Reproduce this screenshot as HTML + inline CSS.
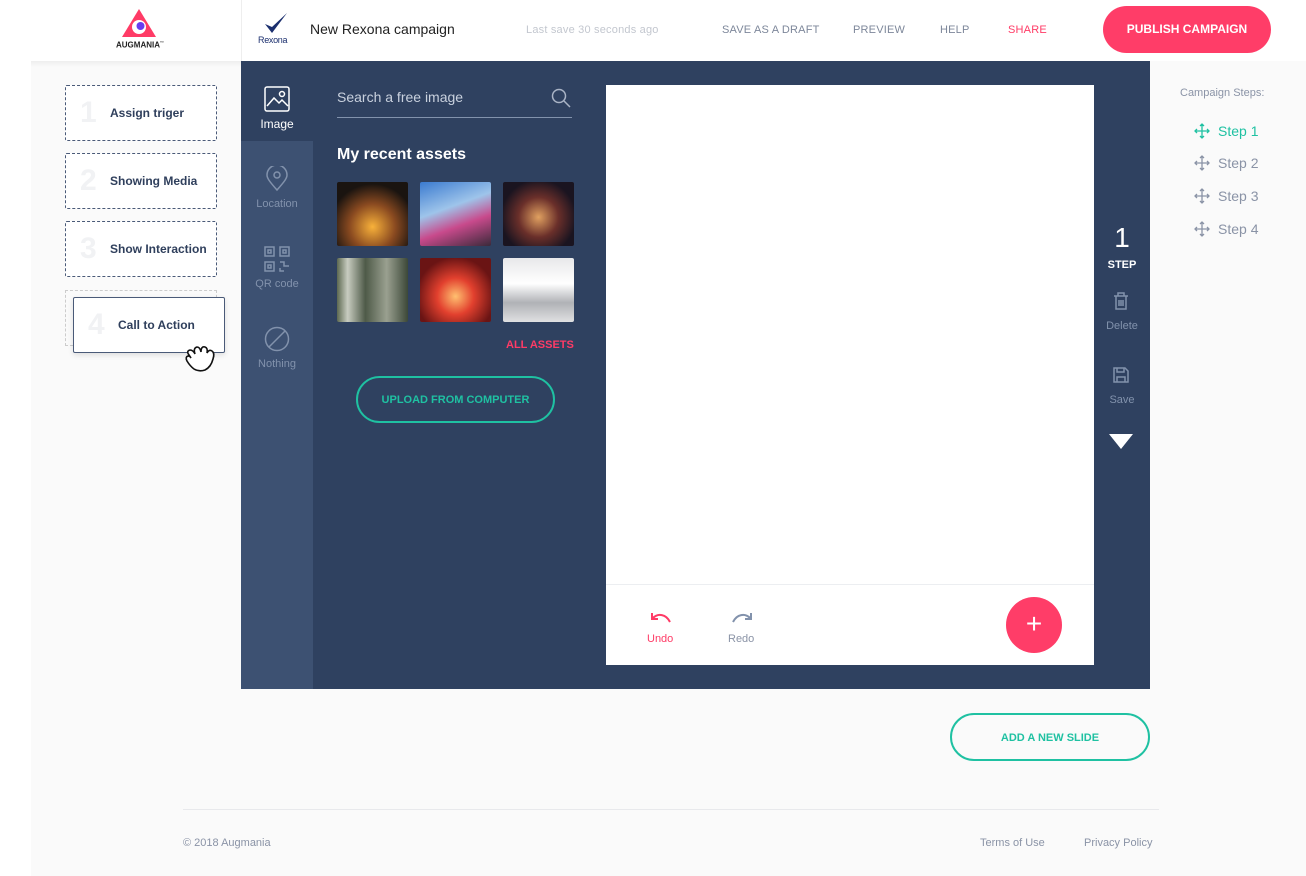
<!DOCTYPE html>
<html><head><meta charset="utf-8"><style>
*{margin:0;padding:0;box-sizing:border-box}
body{width:1306px;height:876px;background:#fff;font-family:"Liberation Sans",Roboto,sans-serif;position:relative;overflow:hidden}
.a{position:absolute}
.bg{left:31px;top:61px;width:1275px;height:815px;background:#fafafa}
.hdr{left:0;top:0;width:1306px;height:61px;background:#fff}
.hsh{left:31px;top:61px;width:210px;height:6px;background:linear-gradient(#eee,#fafafa)}
.nav{top:24px;font-size:11px;color:#7d879a;letter-spacing:.2px}
.card{left:65px;width:152px;height:56px;border:1px dashed #4a5a78;border-radius:2px;background:#fff}
.card .n{position:absolute;left:14px;top:10px;font-size:30px;font-weight:bold;color:#f1f2f4}
.card .t{position:absolute;left:44px;top:20px;font-size:12px;font-weight:bold;color:#2f3f5c}
.dark{left:241px;top:61px;width:909px;height:628px;background:#2f4160}
.col{left:241px;top:141px;width:72px;height:548px;background:#3d5172}
.ic{width:72px;text-align:center;font-size:11px;color:#8292ac;left:241px}
.th{width:71px;height:64px;border-radius:2px}
.st{left:1218px;font-size:14px;color:#8a93a6}
.mv{left:1194px}
</style></head><body>
<div class="a bg"></div>
<div class="a hdr"></div>
<div class="a hsh"></div>
<div class="a" style="left:241px;top:0;width:1px;height:61px;background:#eee"></div>
<svg class="a" style="left:122px;top:9px" width="34" height="30"><polygon points="17,0 34,28 0,28" fill="#ff3b66"/><circle cx="17" cy="18" r="7" fill="#fff"/><circle cx="18.5" cy="17" r="4" fill="#6a3cf0"/></svg>
<div class="a" style="left:116px;top:40px;font-size:8px;font-weight:bold;color:#222">AUGMANIA<sup style="font-size:4px">™</sup></div>
<svg class="a" style="left:262px;top:12px" width="26" height="24"><path d="M3 12 L10 21 L25 1 L10 15 Z" fill="#1b2f6e"/></svg>
<div class="a" style="left:258px;top:35px;font-size:9px;color:#1b2f6e;letter-spacing:-.3px">Rexona</div>
<div class="a" style="left:310px;top:21px;font-size:14px;color:#222">New Rexona campaign</div>
<div class="a nav" style="left:526px;color:#c3c7cf">Last save 30 seconds ago</div>
<div class="a nav" style="left:722px">SAVE AS A DRAFT</div>
<div class="a nav" style="left:853px">PREVIEW</div>
<div class="a nav" style="left:940px">HELP</div>
<div class="a nav" style="left:1008px;color:#ff3b66">SHARE</div>
<div class="a" style="left:1103px;top:6px;width:168px;height:47px;border-radius:24px;background:#ff3d68;color:#fff;font-size:12px;font-weight:bold;text-align:center;line-height:47px">PUBLISH CAMPAIGN</div>
<div class="a card" style="top:85px"><span class="n">1</span><span class="t">Assign triger</span></div>
<div class="a card" style="top:153px"><span class="n">2</span><span class="t">Showing Media</span></div>
<div class="a card" style="top:221px"><span class="n">3</span><span class="t">Show Interaction</span></div>
<div class="a" style="left:65px;top:290px;width:152px;height:56px;border:1px dashed #ccc"></div>
<div class="a card" style="left:73px;top:297px;border:1px solid #4a5a78;box-shadow:0 2px 6px rgba(0,0,0,.12)"><span class="n">4</span><span class="t">Call to Action</span></div>
<svg class="a" style="left:183px;top:341px" width="36" height="34"><path d="M6 14 q-3-4 1-5 q3 0 5 4 q-2-6 2-7 q3 0 4 5 q0-6 4-5 q3 1 2 6 q2-4 5-2 q3 2 1 8 q-2 8-8 11 q-6 2-11-1 q-4-3-7-8 q-2-4 1-5 q2 0 3 2 Z" fill="#fff" stroke="#111" stroke-width="1.6"/></svg>
<div class="a dark"></div>
<div class="a col"></div>
<svg class="a" style="left:264px;top:86px" width="26" height="26" fill="none" stroke="#fff" stroke-width="1.5"><rect x="1" y="1" width="24" height="24" rx="2"/><path d="M3 20 l7-8 5 5 3-3 6 6"/><circle cx="18" cy="8" r="2.5"/></svg>
<div class="a ic" style="top:117px;color:#fff;font-size:12px">Image</div>
<svg class="a" style="left:265px;top:166px" width="24" height="26" fill="none" stroke="#8292ac" stroke-width="1.5"><path d="M12 24 C4 15 2 12 2 9 a10 10 0 0 1 20 0 c0 3-2 6-10 15z"/><circle cx="12" cy="9" r="3"/></svg>
<div class="a ic" style="top:198px">Location</div>
<svg class="a" style="left:264px;top:246px" width="26" height="26" fill="none" stroke="#8292ac" stroke-width="1.5"><rect x="1" y="1" width="9" height="9"/><rect x="16" y="1" width="9" height="9"/><rect x="1" y="16" width="9" height="9"/><rect x="4" y="4" width="3" height="3"/><rect x="19" y="4" width="3" height="3"/><rect x="4" y="19" width="3" height="3"/><path d="M16 16h4v4h5M16 22v3h4"/></svg>
<div class="a ic" style="top:278px">QR code</div>
<svg class="a" style="left:264px;top:326px" width="26" height="26" fill="none" stroke="#8292ac" stroke-width="1.5"><circle cx="13" cy="13" r="11.5"/><path d="M5 21 L21 5"/></svg>
<div class="a ic" style="top:358px">Nothing</div>
<div class="a" style="left:337px;top:89px;font-size:14px;color:#c9d1de">Search a free image</div>
<svg class="a" style="left:551px;top:88px" width="20" height="20" fill="none" stroke="#aab4c6" stroke-width="1.5"><circle cx="8" cy="8" r="6.5"/><path d="M13 13 l6 6"/></svg>
<div class="a" style="left:337px;top:117px;width:235px;height:1px;background:#8292ac"></div>
<div class="a" style="left:337px;top:146px;font-size:16px;font-weight:bold;color:#fff">My recent assets</div>
<div class="a th" style="left:337px;top:182px;background:radial-gradient(circle at 50% 70%,#f8b13a,#8a4a20 40%,#1a1410 75%)"></div>
<div class="a th" style="left:420px;top:182px;background:linear-gradient(160deg,#3b7bd0,#9ec4ea 40%,#c84a8c 65%,#3a2a3a)"></div>
<div class="a th" style="left:503px;top:182px;background:radial-gradient(circle at 50% 55%,#e0a060,#6a2f2a 40%,#1a1420 75%)"></div>
<div class="a th" style="left:337px;top:258px;background:linear-gradient(90deg,#5c6850,#c8ccc0 15%,#4e5a48 40%,#9aa090 70%,#3c4838)"></div>
<div class="a th" style="left:420px;top:258px;background:radial-gradient(circle at 50% 60%,#ffc070,#e2402e 35%,#6a1414 75%)"></div>
<div class="a th" style="left:503px;top:258px;background:linear-gradient(#e8e8ea,#ffffff 40%,#b0b2b6 70%,#e0e0e2)"></div>
<div class="a" style="left:506px;top:339px;font-size:11px;color:#ff3b66;font-weight:bold">ALL ASSETS</div>
<div class="a" style="left:356px;top:376px;width:199px;height:47px;border:2px solid #1fc1a2;border-radius:24px;color:#1fc1a2;font-size:11px;font-weight:bold;text-align:center;line-height:45px">UPLOAD FROM COMPUTER</div>
<div class="a" style="left:606px;top:85px;width:488px;height:580px;background:#fff"></div>
<div class="a" style="left:606px;top:584px;width:488px;height:1px;background:#eceef1"></div>
<svg class="a" style="left:650px;top:610px" width="22" height="14" fill="none" stroke="#ff3b66" stroke-width="2"><path d="M20 12 C16 4 8 3 3 8"/><path d="M2 3 v6 h6"/></svg>
<div class="a" style="left:647px;top:633px;font-size:11px;color:#ff3b66">Undo</div>
<svg class="a" style="left:731px;top:610px" width="22" height="14" fill="none" stroke="#8292ac" stroke-width="2"><path d="M2 12 C6 4 14 3 19 8"/><path d="M20 3 v6 h-6"/></svg>
<div class="a" style="left:728px;top:633px;font-size:11px;color:#8a93a6">Redo</div>
<div class="a" style="left:1006px;top:597px;width:56px;height:56px;border-radius:50%;background:#ff3d68;color:#fff;font-size:28px;text-align:center;line-height:54px">+</div>
<div class="a" style="left:1094px;top:222px;width:56px;text-align:center;color:#fff;font-size:28px;font-weight:300">1</div>
<div class="a" style="left:1094px;top:259px;width:56px;text-align:center;color:#fff;font-size:11px;font-weight:bold">STEP</div>
<svg class="a" style="left:1113px;top:292px" width="16" height="18" fill="none" stroke="#8292ac" stroke-width="1.5"><path d="M1 4h14M5 4V1h6v3M3 4v13h10V4M6 8v6M8 8v6M10 8v6"/></svg>
<div class="a" style="left:1094px;top:320px;width:56px;text-align:center;color:#8292ac;font-size:11px">Delete</div>
<svg class="a" style="left:1113px;top:367px" width="16" height="16" fill="none" stroke="#8292ac" stroke-width="1.5"><path d="M1 1h11l3 3v11H1z"/><path d="M4 1v4h7V1M4 15v-5h8v5"/></svg>
<div class="a" style="left:1094px;top:394px;width:56px;text-align:center;color:#8292ac;font-size:11px">Save</div>
<svg class="a" style="left:1109px;top:434px" width="24" height="16"><polygon points="0,0 24,0 12,15" fill="#fff"/></svg>
<div class="a" style="left:1180px;top:87px;font-size:11px;color:#8a93a6">Campaign Steps:</div>
<svg width="0" height="0" style="position:absolute"><defs><g id="mv" fill="none" stroke-width="1.3"><path d="M8 1v14M1 8h14M6 3l2-2 2 2M6 13l2 2 2-2M3 6l-2 2 2 2M13 6l2 2-2 2"/></g></defs></svg>
<svg class="a mv" style="top:123px" width="16" height="16" stroke="#1fc1a2"><use href="#mv"/></svg>
<svg class="a mv" style="top:155px" width="16" height="16" stroke="#8a93a6"><use href="#mv"/></svg>
<svg class="a mv" style="top:188px" width="16" height="16" stroke="#8a93a6"><use href="#mv"/></svg>
<svg class="a mv" style="top:221px" width="16" height="16" stroke="#8a93a6"><use href="#mv"/></svg>
<div class="a st" style="top:123px;color:#1fc1a2">Step 1</div>
<div class="a st" style="top:155px">Step 2</div>
<div class="a st" style="top:188px">Step 3</div>
<div class="a st" style="top:221px">Step 4</div>
<div class="a" style="left:950px;top:713px;width:200px;height:48px;border:2px solid #1fc1a2;border-radius:24px;color:#1fc1a2;font-size:11px;font-weight:bold;text-align:center;line-height:46px">ADD A NEW SLIDE</div>
<div class="a" style="left:183px;top:809px;width:976px;height:1px;background:#e8e9ec"></div>
<div class="a" style="left:183px;top:837px;font-size:11px;color:#8a93a6">© 2018 Augmania</div>
<div class="a" style="left:980px;top:837px;font-size:11px;color:#8a93a6">Terms of Use</div>
<div class="a" style="left:1084px;top:837px;font-size:11px;color:#8a93a6">Privacy Policy</div>
</body></html>
